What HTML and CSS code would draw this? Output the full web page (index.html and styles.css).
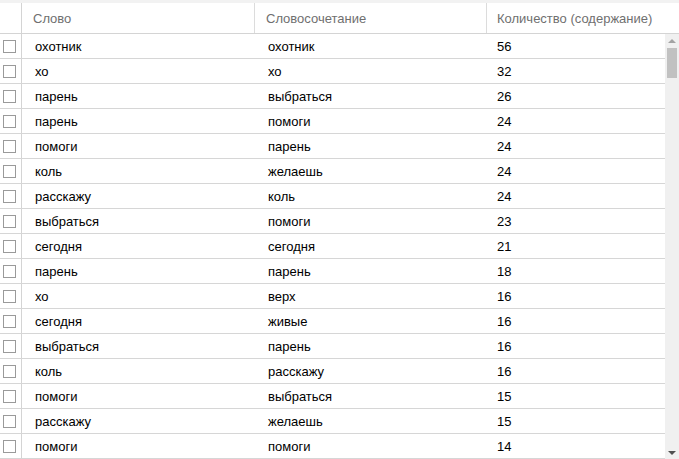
FILE: index.html
```html
<!DOCTYPE html>
<html lang="ru">
<head>
<meta charset="utf-8">
<link rel="stylesheet" href="styles.css">
</head>
<body>
<div class="grid">
  <div class="strip"></div>
  <div class="head">
    <div class="hcell chk"></div>
    <div class="hcell c1">Слово</div>
    <div class="hcell c2">Словосочетание</div>
    <div class="hcell c3">Количество (содержание)</div>
  </div>
  <div class="body">
    <div class="rows">
      <div class="row"><div class="cell chk"><span class="box"></span></div><div class="cell c1">охотник</div><div class="cell c2">охотник</div><div class="cell c3">56</div></div>
      <div class="row"><div class="cell chk"><span class="box"></span></div><div class="cell c1">хо</div><div class="cell c2">хо</div><div class="cell c3">32</div></div>
      <div class="row"><div class="cell chk"><span class="box"></span></div><div class="cell c1">парень</div><div class="cell c2">выбраться</div><div class="cell c3">26</div></div>
      <div class="row"><div class="cell chk"><span class="box"></span></div><div class="cell c1">парень</div><div class="cell c2">помоги</div><div class="cell c3">24</div></div>
      <div class="row"><div class="cell chk"><span class="box"></span></div><div class="cell c1">помоги</div><div class="cell c2">парень</div><div class="cell c3">24</div></div>
      <div class="row"><div class="cell chk"><span class="box"></span></div><div class="cell c1">коль</div><div class="cell c2">желаешь</div><div class="cell c3">24</div></div>
      <div class="row"><div class="cell chk"><span class="box"></span></div><div class="cell c1">расскажу</div><div class="cell c2">коль</div><div class="cell c3">24</div></div>
      <div class="row"><div class="cell chk"><span class="box"></span></div><div class="cell c1">выбраться</div><div class="cell c2">помоги</div><div class="cell c3">23</div></div>
      <div class="row"><div class="cell chk"><span class="box"></span></div><div class="cell c1">сегодня</div><div class="cell c2">сегодня</div><div class="cell c3">21</div></div>
      <div class="row"><div class="cell chk"><span class="box"></span></div><div class="cell c1">парень</div><div class="cell c2">парень</div><div class="cell c3">18</div></div>
      <div class="row"><div class="cell chk"><span class="box"></span></div><div class="cell c1">хо</div><div class="cell c2">верх</div><div class="cell c3">16</div></div>
      <div class="row"><div class="cell chk"><span class="box"></span></div><div class="cell c1">сегодня</div><div class="cell c2">живые</div><div class="cell c3">16</div></div>
      <div class="row"><div class="cell chk"><span class="box"></span></div><div class="cell c1">выбраться</div><div class="cell c2">парень</div><div class="cell c3">16</div></div>
      <div class="row"><div class="cell chk"><span class="box"></span></div><div class="cell c1">коль</div><div class="cell c2">расскажу</div><div class="cell c3">16</div></div>
      <div class="row"><div class="cell chk"><span class="box"></span></div><div class="cell c1">помоги</div><div class="cell c2">выбраться</div><div class="cell c3">15</div></div>
      <div class="row"><div class="cell chk"><span class="box"></span></div><div class="cell c1">расскажу</div><div class="cell c2">желаешь</div><div class="cell c3">15</div></div>
      <div class="row"><div class="cell chk"><span class="box"></span></div><div class="cell c1">помоги</div><div class="cell c2">помоги</div><div class="cell c3">14</div></div>
    </div>
    <div class="scroll">
      <div class="arrow up"></div>
      <div class="thumb"></div>
      <div class="track"></div>
      <div class="arrow down"></div>
    </div>
  </div>
</div>
</body>
</html>
```

FILE: styles.css
```css
html, body {
  margin: 0;
  padding: 0;
  background: #fff;
}
body {
  font-family: "Liberation Sans", Arial, sans-serif;
  font-size: 13px;
  width: 679px;
  height: 459px;
  overflow: hidden;
}
.grid {
  display: flex;
  flex-direction: column;
  width: 679px;
}
.strip {
  height: 3px;
  background: #f2f2f2;
}
.head {
  display: grid;
  grid-template-columns: 22px 233px 232px 1fr;
  height: 30px;
  border-bottom: 1px solid #d4d4d4;
}
.hcell {
  display: flex;
  align-items: center;
  color: #6f6f6f;
  border-right: 1px solid #dcdcdc;
  white-space: nowrap;
}
.hcell.c1 { padding-left: 11px; }
.hcell.c2 { padding-left: 11px; }
.hcell.c3 { padding-left: 10px; border-right: none; }
.body {
  display: flex;
  height: 425px;
}
.rows {
  width: 665px;
}
.row {
  display: grid;
  grid-template-columns: 22px 233px 232px 1fr;
  height: 24px;
  border-bottom: 1px solid #d6d6d6;
}
.cell {
  display: flex;
  align-items: center;
  color: #000;
  white-space: nowrap;
}
.cell.chk {
  border-right: 1px solid #d4d4d4;
  padding-left: 3px;
  padding-top: 1px;
}
.hcell.chk { border-right: 1px solid #d4d4d4; }
.box {
  width: 11px;
  height: 11px;
  border: 1px solid #9a9a9a;
  background: #fff;
}
.cell.c1 { padding-left: 13px; }
.cell.c2 { padding-left: 13px; }
.cell.c3 { padding-left: 10px; }
.scroll {
  width: 14px;
  background: #f0f0f0;
  display: flex;
  flex-direction: column;
  align-items: center;
}
.arrow {
  height: 13px;
  width: 14px;
  display: flex;
  align-items: center;
  justify-content: center;
}
.arrow.up::before {
  content: "";
  border-left: 4px solid transparent;
  border-right: 4px solid transparent;
  border-bottom: 4px solid #a3a3a3;
}
.arrow.down::before {
  content: "";
  border-left: 4px solid transparent;
  border-right: 4px solid transparent;
  border-top: 4px solid #505050;
}
.thumb {
  width: 10px;
  height: 30px;
  margin-top: 1px;
  background: #c1c1c1;
}
.track {
  flex: 1;
}
```
